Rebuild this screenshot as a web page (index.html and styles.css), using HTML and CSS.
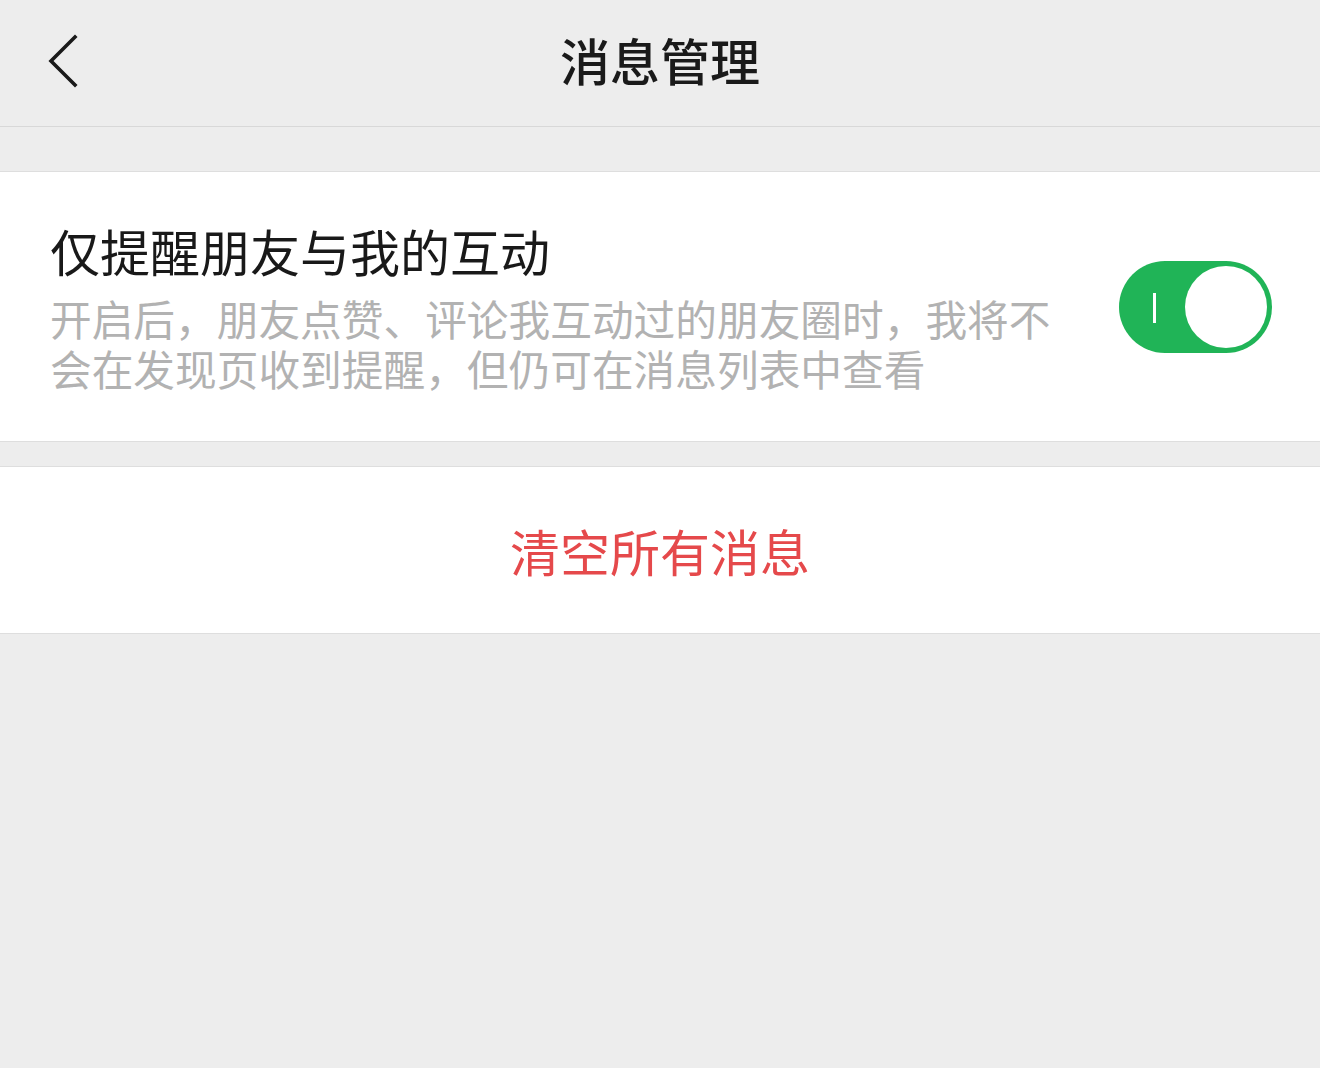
FILE: index.html
```html
<!DOCTYPE html>
<html lang="zh-CN">
<head>
<meta charset="utf-8">
<title>消息管理</title>
<link rel="stylesheet" href="styles.css">
</head>
<body>
<header class="nav">
  <div class="nav-left">
    <svg class="back" width="34" height="56" viewBox="0 0 34 56" aria-hidden="true">
      <path d="M28 4 L4 28 L28 52" fill="none" stroke="#1a1a1a" stroke-width="3.6" stroke-linecap="square" stroke-linejoin="miter"/>
    </svg>
  </div>
  <h1 class="nav-title">消息管理</h1>
  <div class="nav-right"></div>
</header>

<section class="card setting">
  <div class="setting-text">
    <div class="setting-title">仅提醒朋友与我的互动</div>
    <div class="setting-desc">开启后，朋友点赞、评论我互动过的朋友圈时，我将不会在发现页收到提醒，但仍可在消息列表中查看</div>
  </div>
  <div class="switch on">
    <span class="switch-mark"></span>
    <span class="switch-knob"></span>
  </div>
</section>

<section class="card action">
  <div class="action-text">清空所有消息</div>
</section>
</body>
</html>
```

FILE: styles.css
```css
html, body {
  margin: 0;
  padding: 0;
}
body {
  background: #ededed;
  font-family: "Noto Sans CJK SC", "Noto Sans", sans-serif;
  width: 1320px;
  min-height: 1068px;
}
.nav {
  height: 126px;
  border-bottom: 1px solid #d8d8d8;
  display: grid;
  grid-template-columns: 1fr auto 1fr;
  align-items: center;
  background: #ededed;
}
.nav-left {
  padding-left: 47px;
  display: flex;
  align-items: center;
}
.back {
  display: block;
  margin-top: -4px;
}
.nav-title {
  margin: 0;
  font-size: 50px;
  font-weight: 500;
  color: #1a1a1a;
  line-height: 60px;
  margin-top: -8px;
}
.card {
  background: #ffffff;
  border-top: 1px solid #dedede;
  border-bottom: 1px solid #dedede;
}
.setting {
  margin-top: 44px;
  padding: 48px 48px 48px 50px;
  display: flex;
  align-items: center;
  gap: 60px;
}
.setting-text {
  flex: 1;
  min-width: 0;
}
.setting-title {
  font-size: 50px;
  line-height: 60px;
  color: #191919;
  margin-bottom: 13px;
}
.setting-desc {
  font-size: 41.7px;
  line-height: 50px;
  color: #b2b2b2;
}
.switch {
  flex: 0 0 auto;
  width: 153px;
  height: 92px;
  box-sizing: border-box;
  padding: 5px;
  border-radius: 46px;
  background: #20b457;
  display: flex;
  align-items: center;
}
.switch-mark {
  width: 3px;
  height: 30px;
  background: #ffffff;
  margin-left: 29px;
  margin-top: 2px;
}
.switch-knob {
  width: 82px;
  height: 82px;
  border-radius: 50%;
  background: #ffffff;
  margin-left: auto;
}
.action {
  margin-top: 24px;
  height: 166px;
  display: flex;
  align-items: center;
  justify-content: center;
}
.action-text {
  font-size: 50px;
  line-height: 60px;
  color: #e5494b;
}
```
